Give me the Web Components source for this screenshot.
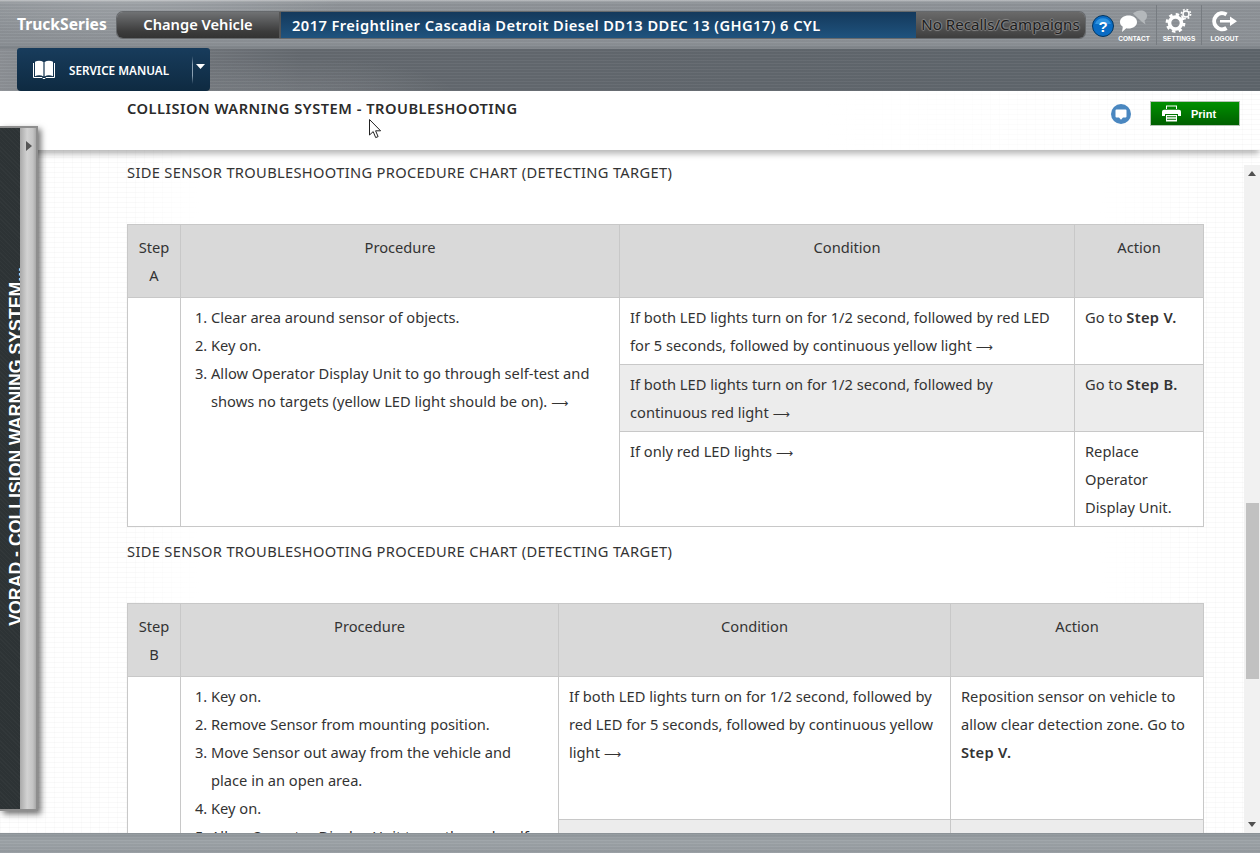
<!DOCTYPE html>
<html>
<head>
<meta charset="utf-8">
<title>Collision Warning System - Troubleshooting</title>
<style>
  html, body { margin: 0; height: 100%; overflow: hidden; }
  body {
    display: flex;
    flex-direction: column;
    height: 853px;
    position: relative;
    font-family: "Noto Sans", "Liberation Sans", sans-serif;
    background: #fff;
  }
</style>
</head>
<body>
<app-header></app-header>
<sub-nav></sub-nav>
<doc-title heading="COLLISION WARNING SYSTEM - TROUBLESHOOTING"></doc-title>
<doc-main>
  <chart-heading>SIDE SENSOR TROUBLESHOOTING PROCEDURE CHART (DETECTING TARGET)</chart-heading>
  <procedure-chart step="A"></procedure-chart>
  <chart-heading>SIDE SENSOR TROUBLESHOOTING PROCEDURE CHART (DETECTING TARGET)</chart-heading>
  <procedure-chart step="B"></procedure-chart>
</doc-main>
<app-footer></app-footer>
<side-tab label="VORAD - COLLISION WARNING SYSTEM..."></side-tab>
<mouse-cursor></mouse-cursor>

<script>
// table contents
const ARROW = '<span class="arr">⟶</span>';
const CHARTS = {
  A: {
    cols: [53, 439, 455, 129],
    rows: [
      { cond: `If both LED lights turn on for 1/2 second, followed by red LED for 5 seconds, followed by continuous yellow light ${ARROW}`, act: 'Go to <b>Step V.</b>' },
      { cond: `If both LED lights turn on for 1/2 second, followed by continuous red light ${ARROW}`, act: 'Go to <b>Step B.</b>', alt: true },
      { cond: `If only red LED lights ${ARROW}`, act: 'Replace Operator Display Unit.' }
    ],
    steps: [
      'Clear area around sensor of objects.',
      'Key on.',
      `Allow Operator Display Unit to go through self-test and shows no targets (yellow LED light should be on). ${ARROW}`
    ]
  },
  B: {
    cols: [53, 378, 392, 253],
    rows: [
      { cond: `If both LED lights turn on for 1/2 second, followed by red LED for 5 seconds, followed by continuous yellow light ${ARROW}`, act: 'Reposition sensor on vehicle to allow clear detection zone. Go to <b>Step V.</b>', h: 143 },
      { cond: '&nbsp;', act: '&nbsp;', alt: true }
    ],
    steps: [
      'Key on.',
      'Remove Sensor from mounting position.',
      'Move Sensor out away from the vehicle and place in an open area.',
      'Key on.',
      'Allow Operator Display Unit to go through self-test.'
    ]
  }
};

const METAL = `repeating-linear-gradient(0deg, rgba(255,255,255,.035) 0 1px, rgba(0,0,0,.03) 1px 3px)`;

class AppHeader extends HTMLElement {
  constructor() {
    super();
    this.attachShadow({ mode: 'open' }).innerHTML = `
      <style>
        :host {
          display: flex;
          align-items: flex-start;
          height: 49px;
          flex: none;
          box-sizing: border-box;
          padding-top: 12px;
          background:
            ${METAL},
            radial-gradient(ellipse 330px 90px at 130px -20px, rgba(255,255,255,.22), transparent 70%),
            linear-gradient(#b8bbbe 0, #8f9499 3px, #8d9297 44px, #7d8287 49px);
          font-family: "Noto Sans", sans-serif;
          color: #fff;
        }
        .brand { width: 100px; margin-left: 17px; font: bold 15.6px/24px "Noto Sans", sans-serif; flex: none; }
        .bar { display: flex; width: 968px; height: 26px; flex: none; border-radius: 6px; box-shadow: 0 0 0 1px #66696c; }
        .change {
          width: 164px; box-sizing: border-box; text-align: center; font: 600 14.67px/25px "Noto Sans", sans-serif;
          background: linear-gradient(#707274, #3c3c3c 75%, #333);
          border-radius: 6px 0 0 6px; border-right: 2px solid #555;
        }
        .vehicle {
          flex: 1; padding-left: 11px; font: 600 14.67px/27px "Noto Sans", sans-serif; letter-spacing: .43px;
          background: linear-gradient(#14395c, #1f537e);
        }
        .recalls {
          width: 169px; box-sizing: border-box; text-align: center; font: 15.1px/25px "Noto Sans", sans-serif;
          color: #1e1e1e; text-shadow: 0 1px 1px #888, 0 -1px 1px #888, 1px 0 1px #888, -1px 0 1px #888;
          background: linear-gradient(#6a6a6a, #3e3e3e); border-radius: 0 6px 6px 0;
        }
        .help { margin: 3px 0 0 7px; flex: none; display: block; }
        .tools { display: flex; margin: -7px 0 0 -2px; }
        .tool { width: 45px; height: 40px; display: flex; flex-direction: column; align-items: center; justify-content: flex-end; border-right: 1px solid #777c81; box-sizing: border-box; }
        .tool:last-child { border-right: 0; }
        .tool svg { display: block; margin-bottom: 1px; }
        .tool span { font: bold 6.5px/8px "Liberation Sans", sans-serif; height: 10px; }
      </style>
      <div class="brand">TruckSeries</div>
      <div class="bar">
        <div class="change">Change Vehicle</div>
        <div class="vehicle">2017 Freightliner Cascadia Detroit Diesel DD13 DDEC 13 (GHG17) 6 CYL</div>
        <div class="recalls">No Recalls/Campaigns</div>
      </div>
      <svg class="help" width="22" height="22" viewBox="0 0 22 22">
        <circle cx="11" cy="11" r="10.5" fill="#0a6cc4" stroke="#04365f"/>
        <path d="M3 9a8.5 8.5 0 0 1 16 0z" fill="#2f93e0"/>
        <text x="11" y="16.5" text-anchor="middle" font-family="Liberation Sans" font-weight="bold" font-size="15" fill="#fff">?</text>
      </svg>
      <div class="tools">
        <div class="tool">
          <svg width="30" height="24" viewBox="0 0 30 24">
            <path d="M14 3.5c2-2 5-3 8-3 4 0 6 2.600 6 5.500 0 2-1 3.500-2.500 4.500l1 4-4-3z" fill="#b4b8bb"/>
            <path d="M1 12c0-4 4-6.500 8.500-6.500S18 8 18 12s-4 6.500-8.500 6.500c-.8 0-1.500 0-2.200-.2L3 22l.8-5.200C2 15.500 1 14 1 12z" fill="#fff"/>
          </svg>
          <span>CONTACT</span>
        </div>
        <div class="tool">
          <svg width="30" height="26" viewBox="0 0 30 26">
            <circle cx="11.500" cy="15" r="6" fill="none" stroke="#fff" stroke-width="3.600"/>
            <circle cx="11.500" cy="15" r="8.600" fill="none" stroke="#fff" stroke-width="2.600" stroke-dasharray="3.400 3.350"/>
            <circle cx="22" cy="6" r="3" fill="none" stroke="#fff" stroke-width="1.500"/>
            <circle cx="22" cy="6" r="4.600" fill="none" stroke="#fff" stroke-width="1.600" stroke-dasharray="1.800 1.800"/>
          </svg>
          <span>SETTINGS</span>
        </div>
        <div class="tool">
          <svg width="30" height="24" viewBox="0 0 30 24">
            <path d="M16.500 4.500A8 8 0 1 0 16.500 18" fill="none" stroke="#fff" stroke-width="4"/>
            <path d="M10 10h10V6.500l7 4.800-7 4.800V12.600H10z" fill="#fff"/>
          </svg>
          <span>LOGOUT</span>
        </div>
      </div>
    `;
  }
}
customElements.define('app-header', AppHeader);

class SubNav extends HTMLElement {
  constructor() {
    super();
    this.attachShadow({ mode: 'open' }).innerHTML = `
      <style>
        :host {
          display: block;
          height: 42px;
          flex: none;
          position: relative;
          background:
            ${METAL},
            radial-gradient(ellipse 230px 60px at 300px 50px, rgba(255,255,255,.12), transparent 70%),
            linear-gradient(90deg, #8d9196, #656a70 24%, #62686e 60%, #5f666c);
        }
        .btn {
          position: absolute; left: 17px; top: -1px; width: 193px; height: 43px;
          display: flex; align-items: center; box-sizing: border-box;
          background: linear-gradient(#183c5c, #0e2a41);
          border-radius: 3px 3px 4px 4px; color: #fff;
        }
        svg { display: block; flex: none; }
        .book { margin-left: 16px; }
        .txt { margin-left: 14px; width: 123px; font: 600 11.7px/14px "Noto Sans", sans-serif; white-space: nowrap; }
        .sep { width: 1px; height: 28px; background: linear-gradient(transparent, #8ba0b2 30%, #8ba0b2 70%, transparent); }
        .caret { margin: -6px 0 0 3px; }
      </style>
      <div class="btn">
        <svg class="book" width="22" height="20" viewBox="0 0 22 20">
          <path d="M.5 3v14.500h8.500l1 1h2l1-1h8.500V3" fill="none" stroke="#fff"/>
          <path d="M2 1.800C4.500.5 8 .5 10.400 2v14.500C8 15 4.500 15 2 16.300zM20 1.800C17.500.5 14 .5 11.600 2v14.500C14 15 17.500 15 20 16.300z" fill="#fff"/>
        </svg>
        <div class="txt">SERVICE MANUAL</div>
        <div class="sep"></div>
        <svg class="caret" width="9" height="5" viewBox="0 0 9 5"><path d="M0 0h9L4.500 5z" fill="#fff"/></svg>
      </div>
    `;
  }
}
customElements.define('sub-nav', SubNav);

const TEXTURE = `
  repeating-linear-gradient(0deg, rgba(0,0,0,.022) 0 1px, transparent 1px 5px),
  repeating-linear-gradient(90deg, rgba(0,0,0,.016) 0 1px, transparent 1px 9px)`;

class DocTitle extends HTMLElement {
  constructor() {
    super();
    this.attachShadow({ mode: 'open' }).innerHTML = `
      <style>
        :host {
          display: flex;
          align-items: flex-start;
          height: 59px;
          flex: none;
          box-sizing: border-box;
          padding: 7px 20px 0 127px;
          position: relative;
          z-index: 2;
          background: linear-gradient(90deg, #fff 0, #fff 65%, rgba(255,255,255,0) 100%), ${TEXTURE}, #fff;
          box-shadow: 0 5px 6px -1px rgba(0,0,0,.28);
          color: #2b2b2b;
        }
        h1 { margin: 0; flex: 1; font: 600 14.67px/20px "Noto Sans", sans-serif; letter-spacing: .5px; }
        svg { display: block; flex: none; }
        .note { margin: 6px 19px 0 0; }
        .print {
          width: 90px; height: 25px; box-sizing: border-box; margin-top: 3px;
          display: flex; align-items: center;
          background: linear-gradient(#009000, #005f00);
          border: 1px solid #b5c4b5; color: #fff;
          font: bold 11px "Liberation Sans", sans-serif;
        }
        .print svg { margin: 0 10px 0 11px; }
      </style>
      <h1>${this.getAttribute('heading')}</h1>
      <svg class="note" width="20" height="20" viewBox="0 0 20 20">
        <circle cx="10" cy="10" r="10" fill="#4a87c0"/>
        <path d="M5.500 5.500h9a1 1 0 0 1 1 1v6a1 1 0 0 1-1 1H12l-2 2.200-2-2.200H5.500a1 1 0 0 1-1-1v-6a1 1 0 0 1 1-1z" fill="#fff"/>
      </svg>
      <div class="print">
        <svg width="19" height="17" viewBox="0 0 19 17">
          <path d="M4 4V.5h11V4h-1V1.500H5V4z" fill="#fff"/>
          <path d="M2 4.800h15a2 2 0 0 1 2 2V11h-3V9H3v2H0V6.800a2 2 0 0 1 2-2z" fill="#fff"/>
          <path d="M4 10h11v6.500H4zM5 11.200v1h9v-1zM5 13.800v1h9v-1z" fill="#fff" fill-rule="evenodd"/>
        </svg>
        Print
      </div>
    `;
  }
}
customElements.define('doc-title', DocTitle);

class DocMain extends HTMLElement {
  constructor() {
    super();
    this.attachShadow({ mode: 'open' }).innerHTML = `
      <style>
        :host {
          display: flex;
          flex: 1;
          min-height: 0;
          overflow: hidden;
          background: ${TEXTURE}, #fff;
        }
        .scroll { flex: 1; min-width: 0; overflow: hidden; padding: 8px 0 0 127px; box-sizing: border-box;
          background: linear-gradient(90deg, transparent 130px, #fff 200px, #fff 1100px, transparent 1204px); }
        .track { width: 16px; margin-top: 15px; background: #f1f1f1; position: relative; flex: none; }
        .thumb { position: absolute; left: 2px; right: 1px; top: 338px; height: 176px; background: #c1c1c1; }
        .track svg { position: absolute; left: 4px; display: block; }
        .content { width: 1077px; }
      </style>
      <div class="scroll"><div class="content"><slot></slot></div></div>
      <div class="track">
        <svg style="top:6px" width="8" height="5" viewBox="0 0 8 5"><path d="M4 0l4 5H0z" fill="#505050"/></svg>
        <div class="thumb"></div>
        <svg style="bottom:6px" width="8" height="5" viewBox="0 0 8 5"><path d="M0 0h8L4 5z" fill="#505050"/></svg>
      </div>
    `;
  }
}
customElements.define('doc-main', DocMain);

class ChartHeading extends HTMLElement {
  constructor() {
    super();
    this.attachShadow({ mode: 'open' }).innerHTML = `
      <style>
        :host { display: block; margin-bottom: 38px; font: 14.67px/28px "Noto Sans", sans-serif; letter-spacing: .33px; color: #333; }
      </style>
      <slot></slot>
    `;
  }
}
customElements.define('chart-heading', ChartHeading);

class ProcedureChart extends HTMLElement {
  connectedCallback() {
    const step = this.getAttribute('step');
    const d = CHARTS[step];
    const cols = d.cols.map(w => `<col style="width:${w}px">`).join('');
    const list = d.steps.map(s => `<li>${s}</li>`).join('');
    const rows = d.rows.map((r, i) => `
      <tr ${r.h ? `style="height:${r.h}px"` : ''}>
        ${i === 0 ? `<td rowspan="${d.rows.length}"></td><td rowspan="${d.rows.length}"><ol>${list}</ol></td>` : ''}
        <td class="${r.alt ? 'alt' : ''}">${r.cond}</td>
        <td class="${r.alt ? 'alt' : ''}">${r.act}</td>
      </tr>`).join('');
    this.attachShadow({ mode: 'open' }).innerHTML = `
      <style>
        :host { display: block; margin-bottom: 10px; font: 14.67px/28px "Noto Sans", sans-serif; color: #333; }
        table { border-collapse: collapse; table-layout: fixed; width: 1076px; background: #fff; }
        th, td { border: 1px solid #c8c8c8; vertical-align: top; }
        th { background: #d9d9d9; font-weight: normal; padding: 8px 10px; text-align: center; height: 56px; }
        td { padding: 5px 10px; }
        td.alt { background: #ececec; }
        ol { margin: 0; padding: 0 0 0 20px; }
        b { font-weight: 600; letter-spacing: .3px; }
        .arr { font-family: "DejaVu Sans", sans-serif; font-size: 12px; line-height: 0; }
      </style>
      <table>
        <colgroup>${cols}</colgroup>
        <tr><th>Step ${step}</th><th>Procedure</th><th>Condition</th><th>Action</th></tr>
        ${rows}
      </table>
    `;
  }
}
customElements.define('procedure-chart', ProcedureChart);

class AppFooter extends HTMLElement {
  constructor() {
    super();
    this.attachShadow({ mode: 'open' }).innerHTML = `
      <style>
        :host { display: block; height: 20px; flex: none; position: relative; z-index: 3;
          background: ${METAL}, linear-gradient(#8f969b, #9fa5a9 40%, #969ca1); }
      </style>
    `;
  }
}
customElements.define('app-footer', AppFooter);

class SideTab extends HTMLElement {
  constructor() {
    super();
    this.attachShadow({ mode: 'open' }).innerHTML = `
      <style>
        :host {
          position: absolute; left: 0; top: 126px; width: 38px; height: 685px; z-index: 4;
          display: flex; box-sizing: border-box;
          border-top: 2px solid #8e8e8e; border-bottom: 2px solid #8e8e8e; border-right: 2px solid #8e8e8e;
          box-shadow: 3px 3px 6px rgba(0,0,0,.55);
        }
        .dark {
          width: 20px; flex: none; background: #2d3335;
          background-image: repeating-linear-gradient(45deg, rgba(255,255,255,.025) 0 1px, transparent 1px 3px);
          display: flex; align-items: flex-end; box-sizing: border-box; padding-bottom: 183px;
        }
        .dark span {
          writing-mode: vertical-rl; transform: rotate(180deg); white-space: nowrap;
          font: bold 17.7px/16px "Liberation Sans", sans-serif; color: #fff; margin-left: 8px;
        }
        .grip { flex: 1; background: linear-gradient(90deg, #a9a9a9, #d2d2d2 45%, #c4c4c4 80%, #a8a8a8); position: relative; }
        svg { position: absolute; left: 6px; top: 13px; display: block; }
      </style>
      <div class="dark"><span>${this.getAttribute('label')}</span></div>
      <div class="grip"><svg width="6" height="10" viewBox="0 0 6 10"><path d="M0 0l6 5-6 5z" fill="#555"/></svg></div>
    `;
  }
}
customElements.define('side-tab', SideTab);

class MouseCursor extends HTMLElement {
  constructor() {
    super();
    this.attachShadow({ mode: 'open' }).innerHTML = `
      <style>
        :host { position: absolute; left: 369px; top: 119px; z-index: 5; display: block; line-height: 0; }
      </style>
      <svg width="13" height="20" viewBox="0 0 13 20">
        <path d="M.5.500v15.500l3.700-3.400 2.500 6 2.400-1-2.500-5.800h5z" fill="#fff" stroke="#222" stroke-width="1"/>
      </svg>
    `;
  }
}
customElements.define('mouse-cursor', MouseCursor);
</script>
</body>
</html>
